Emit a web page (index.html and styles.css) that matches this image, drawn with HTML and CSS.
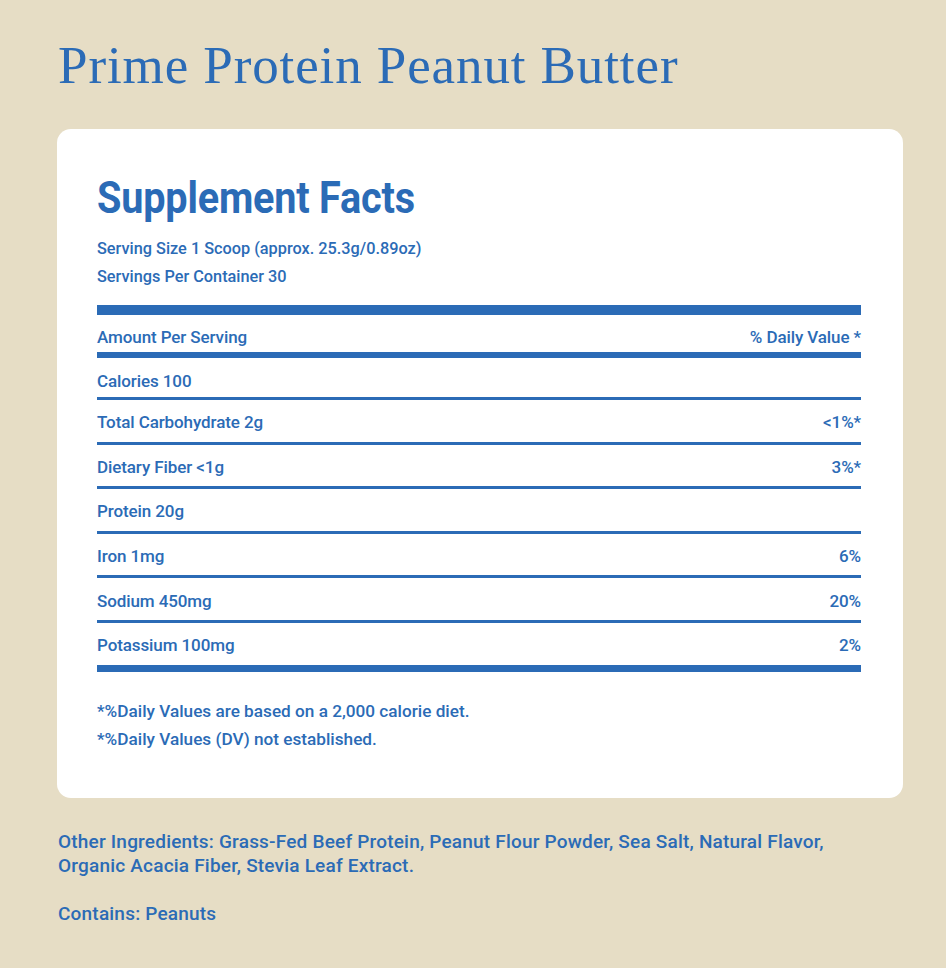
FILE: index.html
```html
<!DOCTYPE html>
<html>
<head>
<meta charset="utf-8">
<link rel="stylesheet" href="styles.css">
</head>
<body>
<main class="page">
  <h1 class="title">Prime Protein Peanut Butter</h1>
  <section class="card">
    <h2 class="facts-title">Supplement Facts</h2>
    <p class="serving">Serving Size 1 Scoop (approx. 25.3g/0.89oz)</p>
    <p class="serving">Servings Per Container 30</p>
    <div class="bar bar-thick"></div>
    <div class="row row-head"><span>Amount Per Serving</span><span>% Daily Value *</span></div>
    <div class="bar bar-mid"></div>
    <div class="row row-first"><span>Calories 100</span><span></span></div>
    <div class="row line"><span>Total Carbohydrate 2g</span><span>&lt;1%*</span></div>
    <div class="row line"><span>Dietary Fiber &lt;1g</span><span>3%*</span></div>
    <div class="row line"><span>Protein 20g</span><span></span></div>
    <div class="row line"><span>Iron 1mg</span><span>6%</span></div>
    <div class="row line"><span>Sodium 450mg</span><span>20%</span></div>
    <div class="row line"><span>Potassium 100mg</span><span>2%</span></div>
    <div class="bar bar-bottom"></div>
    <p class="note">*%Daily Values are based on a 2,000 calorie diet.</p>
    <p class="note">*%Daily Values (DV) not established.</p>
  </section>
  <p class="ingredients">Other Ingredients: Grass-Fed Beef Protein, Peanut Flour Powder, Sea Salt, Natural Flavor, Organic Acacia Fiber, Stevia Leaf Extract.</p>
  <p class="ingredients contains">Contains: Peanuts</p>
</main>
</body>
</html>
```
FILE: styles.css
```css
* { box-sizing: border-box; }
html, body { margin: 0; padding: 0; }
body {
  background: #e6ddc5;
  color: #2b6bb6;
  font-family: "Roboto", "Liberation Sans", sans-serif;
  width: 946px;
  min-height: 968px;
}
.page {
  padding: 35px 43px 0 57px;
}
.title {
  font-family: "Liberation Serif", serif;
  font-weight: 400;
  font-size: 53px;
  line-height: 60px;
  letter-spacing: 0.9px;
  margin: 0 0 34px 1px;
}
.card {
  background: #fff;
  border-radius: 14px;
  padding: 45px 42px 45px 40px;
}
.facts-title {
  font-size: 44px;
  font-weight: 700;
  line-height: 48px;
  margin: 0 0 13px;
  letter-spacing: -0.2px;
  transform: scaleX(0.9);
  transform-origin: left;
}
.serving {
  margin: 0;
  font-size: 16.3px;
  line-height: 28px;
  font-weight: 500;
}
.bar { background: #2b6bb6; }
.bar-thick { height: 10px; margin-top: 14px; }
.bar-mid { height: 6px; }
.bar-bottom { height: 7px; }
.row {
  display: flex;
  justify-content: space-between;
  align-items: center;
  font-size: 17px;
  font-weight: 500;
  letter-spacing: -0.1px;
}
.row-head {
  height: 37px;
  padding-top: 7px;
}
.row-first {
  height: 39px;
  padding-top: 7px;
}
.row.line {
  border-top: 3px solid #2b6bb6;
  height: 44.6px;
  padding-top: 3px;
}
.note {
  margin: 0;
  font-size: 17.2px;
  line-height: 28px;
  font-weight: 500;
}
.bar-bottom + .note { margin-top: 25px; }
.ingredients {
  max-width: 800px;
  margin: 32px 0 0 1px;
  font-size: 19px;
  line-height: 24px;
  font-weight: 500;
  letter-spacing: 0.2px;
}
.ingredients.contains { margin-top: 24px; }
```
